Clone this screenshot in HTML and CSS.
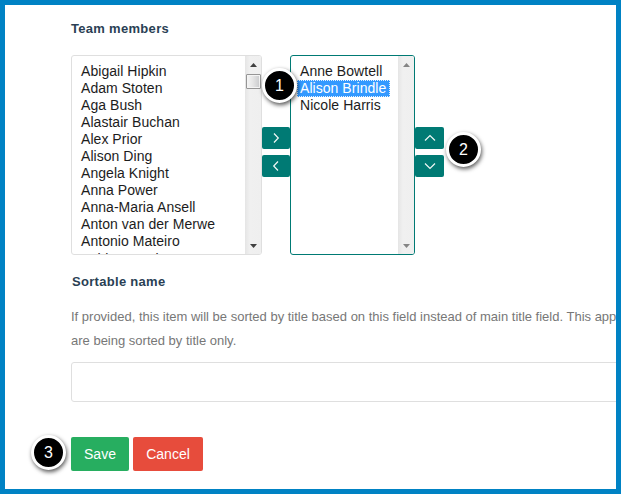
FILE: index.html
```html
<!DOCTYPE html>
<html lang="en">
<head>
<meta charset="utf-8">
<title>Team members</title>
<link rel="stylesheet" href="styles.css">
</head>
<body>
<main class="page">
  <h2 class="label">Team members</h2>
  <div class="picker">
    <div class="listbox available">
      <ul class="options">
        <li>Abigail Hipkin</li><li>Adam Stoten</li><li>Aga Bush</li><li>Alastair Buchan</li><li>Alex Prior</li><li>Alison Ding</li><li>Angela Knight</li><li>Anna Power</li><li>Anna-Maria Ansell</li><li>Anton van der Merwe</li><li>Antonio Mateiro</li><li>Ashley Martin</li>
      </ul>
      <div class="scrollbar">
        <svg class="tri" viewBox="0 0 7 4"><path d="M3.5 0L7 4H0z"/></svg>
        <span class="thumb"></span>
        <svg class="tri down" viewBox="0 0 7 4"><path d="M0 0H7L3.5 4z"/></svg>
      </div>
    </div>
    <div class="moves">
      <button class="move"><svg viewBox="0 0 12 12"><path d="M4 1.5L8.3 6L4 10.5"/></svg></button>
      <button class="move"><svg viewBox="0 0 12 12"><path d="M8 1.5L3.7 6L8 10.5"/></svg></button>
    </div>
    <div class="listbox chosen">
      <ul class="options">
        <li>Anne Bowtell</li><li class="selected">Alison Brindle</li><li>Nicole Harris</li>
      </ul>
      <div class="scrollbar disabled">
        <svg class="tri" viewBox="0 0 7 4"><path d="M3.5 0L7 4H0z"/></svg>
        <svg class="tri down" viewBox="0 0 7 4"><path d="M0 0H7L3.5 4z"/></svg>
      </div>
    </div>
    <div class="moves order">
      <button class="move"><svg viewBox="0 0 12 12"><path d="M1 8.5L6 3.5L11 8.5"/></svg></button>
      <button class="move"><svg viewBox="0 0 12 12"><path d="M1 3.5L6 8.5L11 3.5"/></svg></button>
    </div>
  </div>
  <h2 class="label sortable">Sortable name</h2>
  <p class="help">If provided, this item will be sorted by title based on this field instead of main title field. This app<br>are being sorted by title only.</p>
  <input class="field" type="text">
  <div class="actions">
    <button class="btn save">Save</button>
    <button class="btn cancel">Cancel</button>
  </div>
  <span class="badge one">1</span>
  <span class="badge two">2</span>
  <span class="badge three">3</span>
</main>
</body>
</html>
```
FILE: styles.css
```css
* { box-sizing: border-box; }
body {
  margin: 0;
  font-family: "Liberation Sans", Arial, sans-serif;
}
button, input { font-family: inherit; }
.page {
  position: relative;
  width: 621px;
  height: 494px;
  border: 5px solid #0082c4;
  padding: 15px 0 0 66px;
  overflow: hidden;
  background: #fff;
}
.label {
  margin: 0;
  font-size: 13px;
  line-height: 18px;
  letter-spacing: 0.3px;
  color: #2a3f54;
}
.picker {
  display: flex;
  margin-top: 17px;
  height: 200px;
}
.listbox {
  display: flex;
  border: 1px solid #dfdfdf;
  border-radius: 3px;
  overflow: hidden;
}
.available { width: 191px; }
.chosen { width: 125px; border-color: #007a74; }
.options {
  flex: 1;
  min-width: 0;
  margin: 0;
  padding: 7px 0 0 6px;
  list-style: none;
  font-size: 14px;
  line-height: 17px;
  letter-spacing: 0.05px;
  color: #1c1c1c;
  white-space: nowrap;
}
.options li {
  height: 17px;
  padding-left: 3px;
}
.options li:nth-child(12) { padding-top: 1px; }
.options .selected {
  width: 93px;
  background: #3399ff;
  color: #fff;
  outline: 1px dotted #e4f1ff;
  outline-offset: -1px;
}
.scrollbar {
  display: flex;
  flex-direction: column;
  align-items: center;
  width: 16px;
  padding: 7px 0 6px;
  background: linear-gradient(90deg, #e5e5e5, #f0f0f0 30%, #efefef);
}
.tri { width: 7px; height: 4px; fill: #404040; }
.disabled .tri { fill: #858585; }
.down { margin-top: auto; }
.thumb {
  width: 15px;
  height: 15px;
  margin-top: 7px;
  border: 1px solid #969696;
  border-radius: 1px;
  background: linear-gradient(90deg, #f5f5f5, #e5e5e5 45%, #c9cacc);
  box-shadow: inset 0 0 0 1px #f4f4f4;
}
.moves {
  display: flex;
  flex-direction: column;
  gap: 6px;
  width: 28px;
  padding-top: 72px;
}
.order { width: 29px; }
.move {
  display: flex;
  align-items: center;
  justify-content: center;
  height: 22px;
  padding: 0;
  border: 0;
  border-radius: 2px;
  background: #007a74;
}
.move svg {
  width: 12px;
  height: 12px;
  fill: none;
  stroke: #f0f8f6;
  stroke-width: 1.2;
}
.sortable { margin: 18px 0 0 1px; }
.help {
  margin: 14px 0 0;
  font-size: 13px;
  line-height: 24px;
  color: #777;
  white-space: nowrap;
}
.field {
  display: block;
  width: 640px;
  height: 40px;
  margin-top: 9px;
  border: 1px solid #dfdfdf;
  border-radius: 3px;
  background: #fff;
}
.actions {
  display: flex;
  gap: 4px;
  margin-top: 35px;
}
.btn {
  height: 34px;
  padding: 0;
  border: 0;
  border-radius: 2px;
  color: #fff;
  font-size: 14px;
}
.save { width: 58px; background: #27ae60; }
.cancel { width: 70px; background: #e74c3c; }
.badge {
  position: absolute;
  width: 35px;
  height: 35px;
  border: 3px solid #fff;
  border-radius: 50%;
  background: #000;
  box-shadow: 1px 2px 4px rgba(0, 0, 0, 0.65);
  color: #fff;
  font-size: 16px;
  line-height: 29px;
  text-align: center;
}
.one { left: 257px; top: 63px; }
.two { left: 441px; top: 127px; }
.three { left: 26px; top: 430px; }
```
